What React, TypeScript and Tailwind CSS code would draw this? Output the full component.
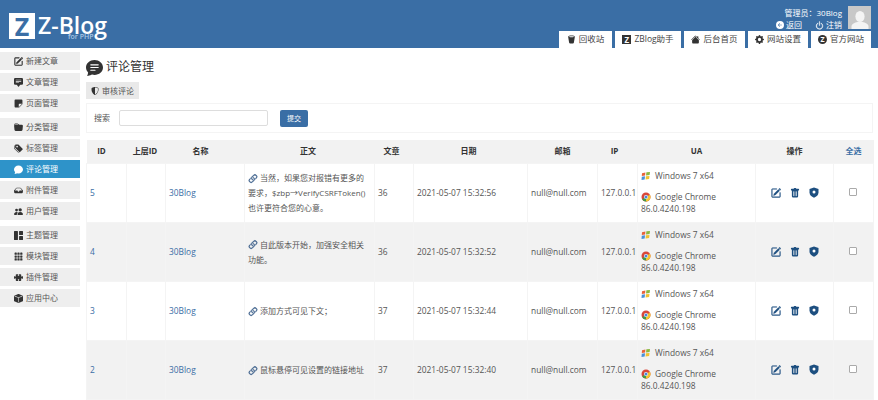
import type { ReactNode } from 'react';
import {
  BsArrowLeftCircleFill, BsBoxFill, BsChatFill, BsChatSquareTextFill, BsChatTextFill, BsFolderFill, BsGearFill, BsGrid1X2Fill,
  BsGrid3X3GapFill, BsHouseFill, BsInboxFill, BsLink45Deg, BsPencilSquare, BsPeopleFill, BsPower, BsPuzzleFill,
  BsShieldShaded, BsStickyFill, BsTagsFill, BsTrash2Fill, BsTrashFill,
} from 'react-icons/bs';

const font = "font-['Open_Sans','Noto_Sans_CJK_SC',sans-serif]";

const menu: { label: string; icon: ReactNode; active?: boolean; gap?: boolean }[] = [
  { label: '新建文章', icon: <BsPencilSquare className="stroke-[0.8px]" /> },
  { label: '文章管理', icon: <BsChatSquareTextFill /> },
  { label: '页面管理', icon: <BsStickyFill /> },
  { label: '分类管理', icon: <BsFolderFill />, gap: true },
  { label: '标签管理', icon: <BsTagsFill /> },
  { label: '评论管理', icon: <BsChatFill />, active: true },
  { label: '附件管理', icon: <BsInboxFill /> },
  { label: '用户管理', icon: <BsPeopleFill /> },
  { label: '主题管理', icon: <BsGrid1X2Fill />, gap: true },
  { label: '模块管理', icon: <BsGrid3X3GapFill /> },
  { label: '插件管理', icon: <BsPuzzleFill /> },
  { label: '应用中心', icon: <BsBoxFill /> },
];

const rows = [
  { id: 5, text: ['当然，如果您对报错有更多的', '要求，$zbp→VerifyCSRFToken()', '也许更符合您的心意。'], post: 36, date: '2021-05-07 15:32:56' },
  { id: 4, text: ['自此版本开始，加强安全相关', '功能。'], post: 36, date: '2021-05-07 15:32:52' },
  { id: 3, text: ['添加方式可见下文；'], post: 37, date: '2021-05-07 15:32:44' },
  { id: 2, text: ['鼠标悬停可见设置的链接地址'], post: 37, date: '2021-05-07 15:32:40' },
];

function ZMark() {
  return <span className="flex h-[9px] w-[9px] items-center justify-center bg-[#333] text-[8px] font-bold leading-none text-white">Z</span>;
}

function ZCircle() {
  return <span className="flex h-[9px] w-[9px] items-center justify-center rounded-full bg-[#333] text-[7px] font-bold leading-none text-white">Z</span>;
}

function ShieldDot() {
  return (
    <svg width="10" height="11" viewBox="0 0 10 11">
      <path d="M5 .5 9.500 2v3.500C9.500 8 7.500 9.800 5 10.700 2.500 9.800.5 8 .5 5.500V2z" fill="#1d4f80" />
      <circle cx="5" cy="5" r="1.500" fill="#fff" />
    </svg>
  );
}

function WindowsLogo() {
  return (
    <svg width="10" height="10" viewBox="0 0 10 10" className="shrink-0">
      <path d="M1 2.2 4.4 1.4 4.1 4.4 0.8 5z" fill="#e8623a" />
      <path d="M5.4 1.200 9 1 8.600 4 5 4.400z" fill="#8cb840" />
      <path d="M0.8 5.800 4 5.300 3.700 8.400 0.500 8.900z" fill="#4a8fd8" />
      <path d="M4.900 5.200 8.500 4.900 8.100 8 4.600 8.400z" fill="#f2c230" />
    </svg>
  );
}

function ChromeLogo() {
  return (
    <svg width="10" height="10" viewBox="0 0 10 10" className="shrink-0">
      <circle cx="5" cy="5" r="4.500" fill="#d8483a" />
      <path d="M5 5 1.100 7.250A4.500 4.500 0 0 0 5 9.500l2.200-1z" fill="#3f9c4a" />
      <path d="M5 5 8.900 2.750A4.500 4.500 0 0 1 5 9.500z" fill="#f4c430" />
      <circle cx="5" cy="5" r="2" fill="#fff" />
      <circle cx="5" cy="5" r="1.500" fill="#4a86d8" />
    </svg>
  );
}

function Header() {
  const tabs: { label: string; icon: ReactNode; w: string }[] = [
    { label: '回收站', icon: <BsTrash2Fill />, w: 'w-[53px]' },
    { label: 'ZBlog助手', icon: <ZMark />, w: 'w-[66px]' },
    { label: '后台首页', icon: <BsHouseFill />, w: 'w-[61px]' },
    { label: '网站设置', icon: <BsGearFill />, w: 'w-[60px]' },
    { label: '官方网站', icon: <ZCircle />, w: 'w-[60px]' },
  ];
  return (
    <header className="flex h-[48px] items-stretch justify-between bg-[#3a6ea5] pl-[9px] pr-[7px]">
      <div className="relative flex items-start gap-[3px] self-start pt-[13px]">
        <span className="flex h-[26px] w-[26px] items-center justify-center bg-white text-[25px] font-bold leading-none text-[#3a6ea5]">Z</span>
        <span className="-mt-[1px] text-[23px] font-semibold leading-[26px] text-white">Z-Blog</span>
        <span className="absolute left-[59px] top-[33px] text-[7px] font-semibold leading-none text-[#a9c6e4]">for PHP</span>
      </div>
      <div className="flex flex-col items-end">
        <div className="flex h-[31px] items-start gap-[6px] pt-[6px]">
          <div className="flex flex-col items-end pt-[1px] text-[8px] leading-[12px] text-white">
            <span>管理员：30Blog</span>
            <div className="flex items-center gap-[13px]">
              <span className="flex items-center gap-[2px]"><BsArrowLeftCircleFill className="text-[8px]" />返回</span>
              <span className="flex items-center gap-[2px]"><BsPower className="stroke-[0.6px] text-[9px]" />注销</span>
            </div>
          </div>
          <div className="flex h-[23px] w-[23px] items-end justify-center overflow-hidden bg-[#c8c8c8]">
            <svg width="20" height="20" viewBox="0 0 20 20">
              <ellipse cx="10" cy="7.500" rx="4.600" ry="5.500" fill="#f4f4f4" />
              <path d="M1.500 20v-2.500c0-2.500 3.500-4 6-4.500h5c2.500.5 6 2 6 4.500V20z" fill="#f4f4f4" />
            </svg>
          </div>
        </div>
        <nav className="flex h-[17px] gap-[3px]">
          {tabs.map((t) => (
            <a key={t.label} className={`flex ${t.w} items-center justify-center gap-[3px] bg-white text-[8.500px] leading-none text-[#444]`}>
              <span className="text-[9px] text-[#333]">{t.icon}</span>
              {t.label}
            </a>
          ))}
        </nav>
      </div>
    </header>
  );
}

function Sidebar() {
  return (
    <aside className="flex w-[80px] shrink-0 flex-col gap-[3px] pt-[4px]">
      {menu.map((m) => (
        <a
          key={m.label}
          className={`flex h-[18px] items-center gap-[3px] pl-[14px] text-[8px] leading-none ${m.gap ? 'mt-[3px]' : ''} ${
            m.active ? 'bg-[#2e93c9] text-white' : 'bg-[#eeeeee] text-[#555]'
          }`}
        >
          <span className={`w-[9px] text-[9px] ${m.active ? 'text-white' : 'text-[#333]'}`}>{m.icon}</span>
          {m.label}
        </a>
      ))}
    </aside>
  );
}

function Table() {
  const heads: [string, string][] = [
    ['ID', 'pr-[10px]'],
    ['上层ID', 'pr-[2px]'],
    ['名称', 'pr-[9px]'],
    ['正文', 'pr-[3px]'],
    ['文章', 'pr-[5px]'],
    ['日期', 'pr-[4px]'],
    ['邮箱', ''],
    ['IP', 'pr-[6px]'],
    ['UA', ''],
    ['操作', ''],
  ];
  const cell = 'border border-[#f4f4f4] px-[3px] align-middle';
  return (
    <table className="w-[787px] table-fixed border-collapse text-[8.400px] leading-[12px] text-[#555]">
      <colgroup>
        <col className="w-[40px]" />
        <col className="w-[39px]" />
        <col className="w-[79px]" />
        <col className="w-[130px]" />
        <col className="w-[39px]" />
        <col className="w-[114px]" />
        <col className="w-[70px]" />
        <col className="w-[40px]" />
        <col className="w-[118px]" />
        <col className="w-[78px]" />
        <col className="w-[40px]" />
      </colgroup>
      <thead>
        <tr className="h-[23px] bg-[#f2f2f2] text-[8px] text-[#333]">
          {heads.map(([h, pad]) => (
            <th key={h} className={`font-bold ${pad}`}>{h}</th>
          ))}
          <th className="font-bold text-[#3a6ea5]">全选</th>
        </tr>
      </thead>
      <tbody>
        {rows.map((r, i) => (
          <tr key={r.id} className={`h-[59px] ${i % 2 ? 'bg-[#f2f2f2]' : 'bg-white'}`}>
            <td className={`${cell} text-[#3a6ea5]`}>{r.id}</td>
            <td className={cell} />
            <td className={`${cell} text-[#3a6ea5]`}>30Blog</td>
            <td className={`${cell} text-[8px] leading-[15px]`}>
              {r.text.map((line, n) => (
                <div key={line} className="whitespace-nowrap">
                  {n === 0 && <BsLink45Deg className="-ml-[1px] mr-[1px] inline stroke-[0.5px] text-[12px] text-[#3a5f8a]" />}
                  {line}
                </div>
              ))}
            </td>
            <td className={cell}>{r.post}</td>
            <td className={`${cell} whitespace-nowrap`}>{r.date}</td>
            <td className={`${cell} whitespace-nowrap`}>null@null.com</td>
            <td className={`${cell} whitespace-nowrap !pr-0`}>127.0.0.1</td>
            <td className={cell}>
              <div className="flex items-center gap-[4px]"><WindowsLogo />Windows 7 x64</div>
              <div className="mt-[9px] flex items-center gap-[4px]"><ChromeLogo />Google Chrome</div>
              <div>86.0.4240.198</div>
            </td>
            <td className={cell}>
              <div className="flex items-center justify-center gap-[9px] text-[10px] text-[#1d4f80]">
                <BsPencilSquare className="stroke-[0.6px]" />
                <BsTrashFill />
                <ShieldDot />
              </div>
            </td>
            <td className={`${cell} text-center`}>
              <input type="checkbox" className="-ml-[1px] h-[8px] w-[8px] appearance-none rounded-[1px] border border-[#aaa] bg-white" />
            </td>
          </tr>
        ))}
      </tbody>
    </table>
  );
}

export default function App() {
  return (
    <div className={`h-[400px] w-[878px] overflow-hidden bg-white ${font}`}>
      <Header />
      <div className="flex gap-[6px]">
        <Sidebar />
        <main className="min-w-0 flex-1">
          <div className="flex h-[34px] items-center gap-[3px] pt-[4px] text-[12px] leading-none text-[#333]">
            <BsChatTextFill className="text-[17px] text-[#333]" />
            评论管理
          </div>
          <a className="flex h-[17px] w-[53px] items-center justify-center gap-[3px] bg-[#e9e9e9] text-[8px] leading-none text-[#555]">
            <BsShieldShaded className="text-[8px] text-[#333]" />
            审核评论
          </a>
          <form className="mt-[4px] flex h-[30px] w-[787px] items-center border border-[#f4f4f4] pl-[7px] text-[8px] text-[#555]">
            <span className="w-[25px]">搜索</span>
            <input className="h-[16px] w-[149px] rounded-[2px] border border-[#ddd] bg-white" />
            <button type="button" className="ml-[12px] h-[17px] w-[28px] rounded-[2px] bg-[#3a6ea5] text-[7px] leading-none text-white">提交</button>
          </form>
          <div className="mt-[7px]">
            <Table />
          </div>
        </main>
      </div>
    </div>
  );
}
